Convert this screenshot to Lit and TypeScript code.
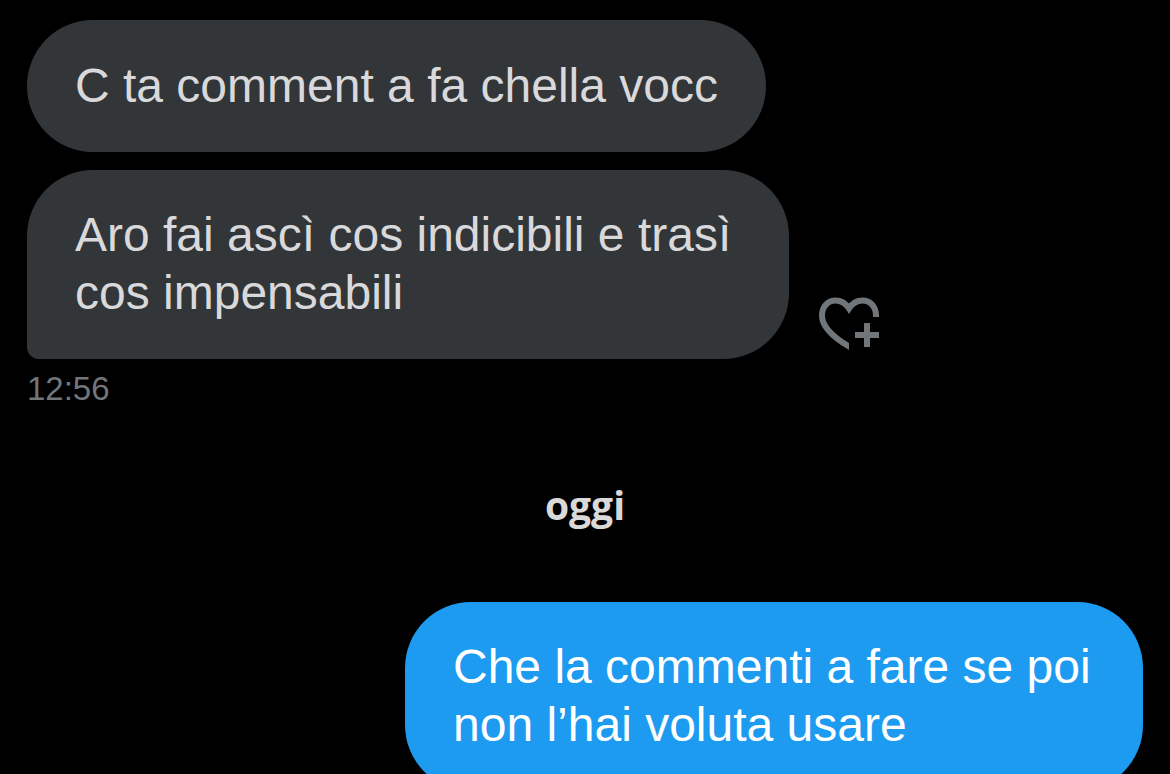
import { LitElement, html, css } from "lit";
import { customElement } from "lit/decorators.js";

@customElement("app-root")
export class AppRoot extends LitElement {
  static styles = css`
    :host {
      display: block;
      height: 100vh;
      overflow: hidden;
      background: #000;
      color: #d9d9d9;
      font-family: "Liberation Sans", Arial, sans-serif;
    }
    .thread {
      display: flex;
      flex-direction: column;
      padding: 20px 27px 0;
    }
    .row {
      display: flex;
      align-items: flex-end;
      gap: 30px;
      margin-bottom: 18px;
    }
    .row.last { margin-bottom: 12px; }
    .row.sent { justify-content: flex-end; }
    .bubble {
      box-sizing: border-box;
      max-width: calc(100% - 354px);
      margin: 0;
      padding: 36px 48px 37px;
      border-radius: 66px;
      background: #333639;
      color: #d9d9dc;
      font-size: 48px;
      line-height: 58px;
    }
    .single { line-height: 59px; }
    .tail { border-bottom-left-radius: 12px; }
    .sent .bubble {
      max-width: calc(100% - 378px);
      background: #1d9bf0;
      color: #fff;
    }
    .react {
      display: block;
      padding: 0;
      margin-bottom: 8px;
      border: 0;
      background: none;
      color: #71767b;
    }
    .react svg { display: block; }
    .time {
      color: #71767b;
      font-size: 33px;
      line-height: 36px;
    }
    .day {
      margin: 74px 0 73px;
      text-align: center;
      font-family: "Open Sans", sans-serif;
      font-size: 39px;
      font-weight: 700;
      line-height: 48px;
    }
  `;

  render() {
    return html`
      <main class="thread">
        <div class="row"><p class="bubble single">C ta comment a fa chella vocc</p></div>
        <div class="row last">
          <p class="bubble tail">Aro fai ascì cos indicibili e trasì cos impensabili</p>
          <button class="react" aria-label="Aggiungi reazione">
            <svg width="60" height="54" viewBox="0 0 60 54" fill="none" stroke="currentColor" stroke-width="6">
              <clipPath id="heart-cut"><path d="M0 0H60V20H30V54H0Z" /></clipPath>
              <path
                clip-path="url(#heart-cut)"
                d="M36 53L30 49.5C13 39.5 3 29.5 3 18.5C3 9.500 9 3.5 16.5 3.5C22 3.5 26.500 6 30 11.500C33.500 6 38 3.5 43.500 3.5C51 3.5 57 9.500 57 18.500V22"
              />
              <path d="M48 26V50M36 38H60" />
            </svg>
          </button>
        </div>
        <time class="time">12:56</time>
        <h2 class="day">oggi</h2>
        <div class="row sent"><p class="bubble">Che la commenti a fare se poi non l’hai voluta usare</p></div>
      </main>
    `;
  }
}
